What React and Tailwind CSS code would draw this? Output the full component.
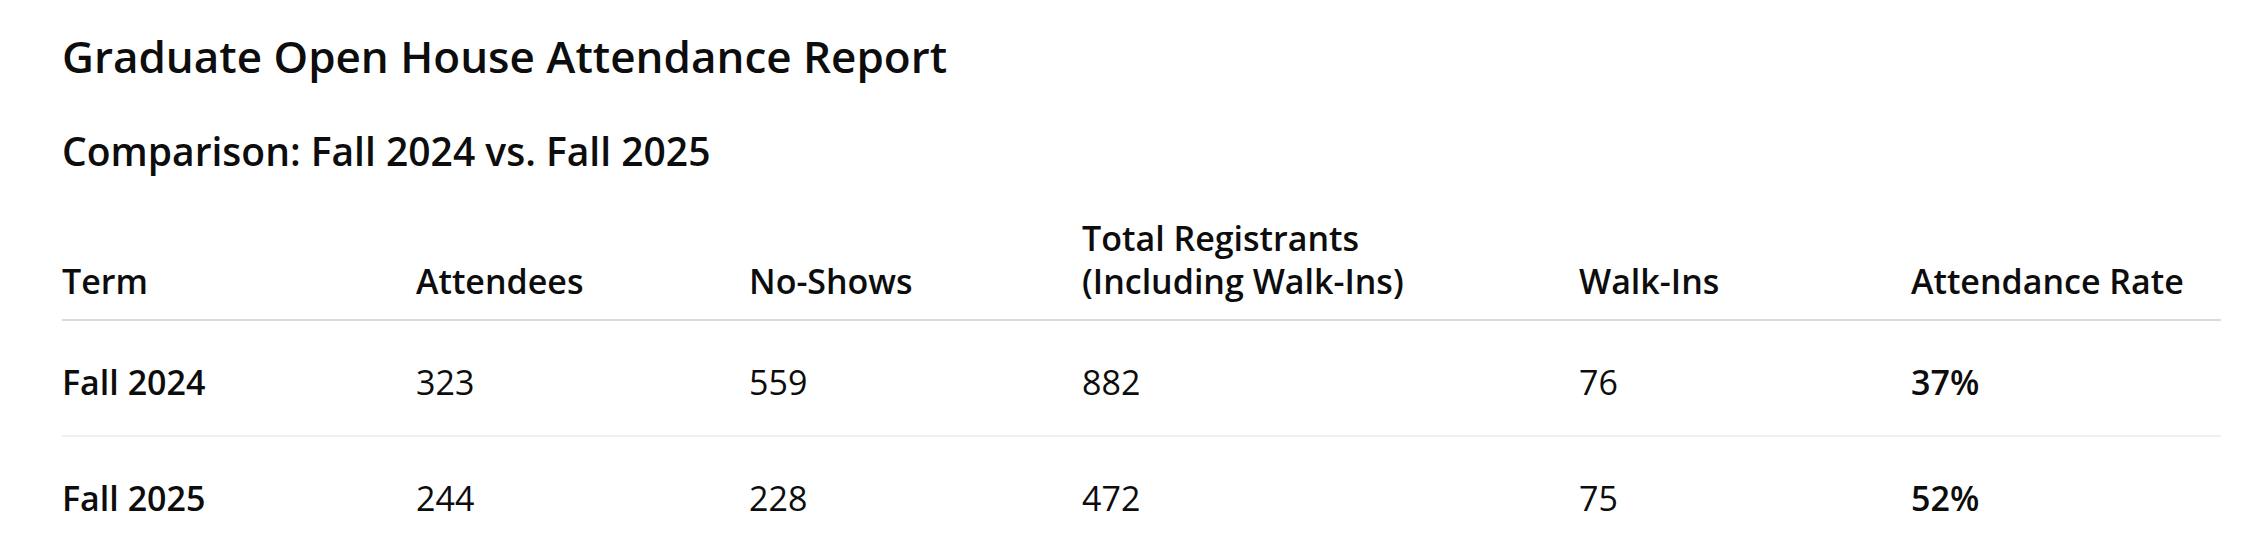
const ROWS = [
  { term: 'Fall 2024', attendees: 323, noShows: 559, total: 882, walkIns: 76, rate: '37%' },
  { term: 'Fall 2025', attendees: 244, noShows: 228, total: 472, walkIns: 75, rate: '52%' },
];

export default function App() {
  return (
    <div className="min-h-screen bg-white text-[#0d0d0d] px-[62px] pt-[30px]" style={{ fontFamily: '"Open Sans", sans-serif' }}>
      <h1 className="text-[44px] leading-[52px] font-semibold">Graduate Open House Attendance Report</h1>
      <h2 className="mt-[45px] text-[39px] leading-[48px] font-semibold">Comparison: Fall 2024 vs. Fall 2025</h2>

      <table className="mt-[42px] w-[2159px] table-fixed border-collapse text-[34px] leading-[43px]">
        <colgroup>
          <col className="w-[354px]" />
          <col className="w-[333px]" />
          <col className="w-[333px]" />
          <col className="w-[497px]" />
          <col className="w-[332px]" />
          <col className="w-[310px]" />
        </colgroup>
        <thead>
          <tr className="border-b-2 border-[#dadada] text-left align-bottom">
            <th className="pb-[16px] font-semibold">Term</th>
            <th className="pb-[16px] font-semibold">Attendees</th>
            <th className="pb-[16px] font-semibold">No-Shows</th>
            <th className="pb-[16px] font-semibold">Total Registrants<br />(Including Walk-Ins)</th>
            <th className="pb-[16px] font-semibold">Walk-Ins</th>
            <th className="pb-[16px] font-semibold">Attendance Rate</th>
          </tr>
        </thead>
        <tbody>
          {ROWS.map((r) => (
            <tr key={r.term} className="border-b-2 border-[#efefef] last:border-b-0">
              <td className="pt-[40px] pb-[31px] font-semibold">{r.term}</td>
              <td className="pt-[40px] pb-[31px]">{r.attendees}</td>
              <td className="pt-[40px] pb-[31px]">{r.noShows}</td>
              <td className="pt-[40px] pb-[31px]">{r.total}</td>
              <td className="pt-[40px] pb-[31px]">{r.walkIns}</td>
              <td className="pt-[40px] pb-[31px] font-semibold">{r.rate}</td>
            </tr>
          ))}
        </tbody>
      </table>
    </div>
  );
}
